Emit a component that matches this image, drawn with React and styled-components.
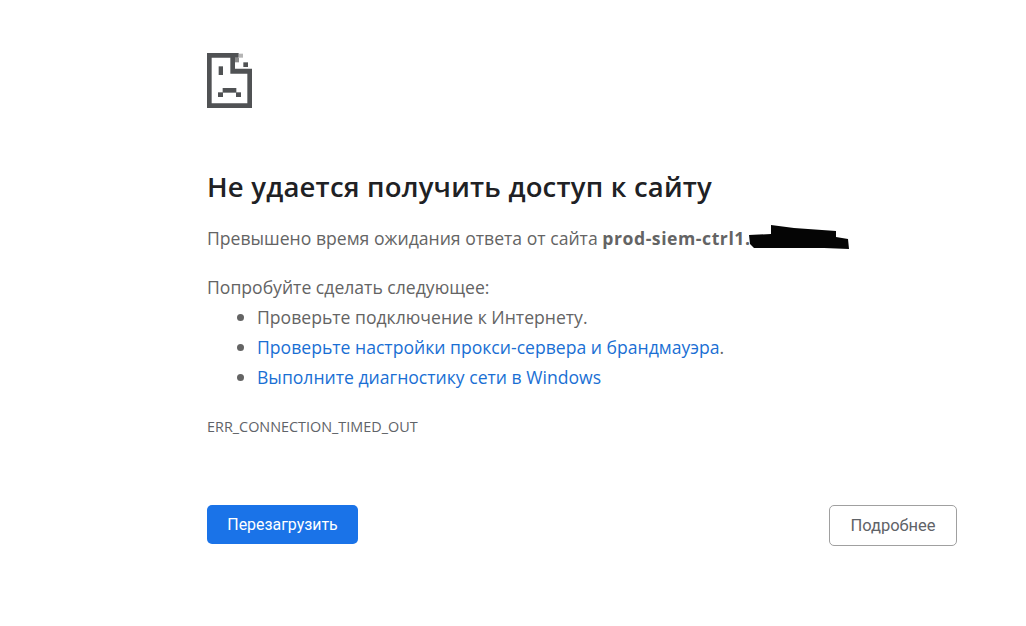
import React from "react";
import styled, { createGlobalStyle } from "styled-components";

const Global = createGlobalStyle`
  html, body { margin: 0; padding: 0; background: #fff; }
  body { font-family: "Open Sans", "Noto Sans", sans-serif; color: #646464; }
`;
const Page = styled.div`
  width: 1026px; height: 626px; box-sizing: border-box; padding: 53px 69px 0 207px;
  display: flex; flex-direction: column; overflow: hidden;
`;
const Icon = styled.svg`width: 45px; height: 55px; display: block; flex: none;`;
const Title = styled.h1`
  margin: 60px 0 0; font-size: 27.5px; line-height: 38px; font-weight: 600; color: #202124; letter-spacing: 0.2px;
`;
const Para = styled.p`
  margin: 17px 0 0; font-size: 17.6px; line-height: 30px; display: flex; align-items: center; white-space: nowrap;
`;
const Lead = styled.span`word-spacing: 0.05px;`;
const Host = styled.strong`font-weight: 700; letter-spacing: 0.55px;`;
const Blob = styled.svg`width: 101px; height: 26px; display: block; margin-left: -1px; flex: none;`;
const Tips = styled.div`margin-top: 19px; font-size: 17.6px; line-height: 30px;`;
const TipList = styled.ul`margin: 0; padding: 0 0 0 50px; list-style: none;`;
const Tip = styled.li`
  position: relative;
  &::before { content: ""; position: absolute; left: -20px; top: 12px; width: 7px; height: 7px; border-radius: 50%; background: #646464; }
`;
const TipLink = styled.a`color: #1a6fd4; text-decoration: none;`;
const Code = styled.div`margin-top: 25px; font-size: 14.4px; line-height: 20px; color: #5f6368;`;
const Actions = styled.div`margin-top: 68px; display: flex; justify-content: space-between; align-items: flex-start;`;
const Primary = styled.button`
  width: 151px; height: 39px; border: 0; border-radius: 5px; background: #1a73e8; color: #fff;
  font: 400 15.9px Roboto, sans-serif; padding: 0;
`;
const Secondary = styled.button`
  width: 128px; height: 41px; border: 1px solid #a0a0a0; border-radius: 5px; background: #fff; color: #5f6368;
  font: 400 16.5px Roboto, sans-serif; padding: 0;
`;

const SadPage = () => (
  <Icon viewBox="0 0 135 165" aria-hidden="true">
    <g fill="#505254">
      <path d="M0 0H95V14H84V47H135V165H0ZM14 14V151H121V62H70V14Z" fillRule="evenodd" />
      <rect x="35" y="40" width="13" height="26" />
      <rect x="47" y="105" width="41" height="14" />
      <rect x="33" y="118" width="15" height="14" />
      <rect x="87" y="118" width="15" height="14" />
      <rect x="109" y="28" width="14" height="14" />
    </g>
    <rect x="84" y="15" width="12" height="13" fill="#8c8c8c" />
    <rect x="96" y="2" width="12" height="12" fill="#b5b5b5" />
  </Icon>
);

export default function App() {
  return (
    <>
      <Global />
      <Page>
        <SadPage />
        <Title>Не удается получить доступ к сайту</Title>
        <Para>
          <Lead>Превышено время ожидания ответа от сайта&nbsp;<Host>prod-siem-ctrl1.</Host></Lead>
          <Blob viewBox="0 0 101 26" aria-hidden="true">
            <path d="M0 10L22 9L22 0L45 3L87 6L87 12L99 14L100 24L75 23L40 23L5 23L1 19Z" fill="#050505" />
          </Blob>
        </Para>
        <Tips>
          Попробуйте сделать следующее:
          <TipList>
            <Tip>Проверьте подключение к Интернету.</Tip>
            <Tip><TipLink>Проверьте настройки прокси-сервера и брандмауэра</TipLink>.</Tip>
            <Tip><TipLink>Выполните диагностику сети в Windows</TipLink></Tip>
          </TipList>
        </Tips>
        <Code>ERR_CONNECTION_TIMED_OUT</Code>
        <Actions>
          <Primary>Перезагрузить</Primary>
          <Secondary>Подробнее</Secondary>
        </Actions>
      </Page>
    </>
  );
}
